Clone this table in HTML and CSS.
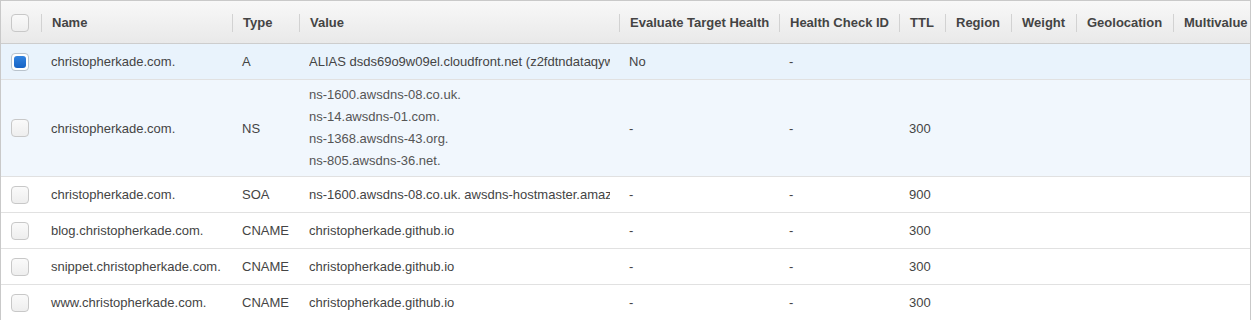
FILE: index.html
```html
<!DOCTYPE html>
<html lang="en">
<head>
    <meta charset="UTF-8">
    <title>Record Sets</title>
    <link rel="stylesheet" href="styles.css">
</head>
<body>
    <div class="records">
        <table class="records-table">
            <colgroup>
                <col class="col-check">
                <col class="col-name">
                <col class="col-type">
                <col class="col-value">
                <col class="col-eval">
                <col class="col-health">
                <col class="col-ttl">
                <col class="col-region">
                <col class="col-weight">
                <col class="col-geo">
                <col class="col-multi">
            </colgroup>
            <thead>
                <tr>
                    <th class="check-cell"><span class="checkbox"></span></th>
                    <th><div class="th-inner">Name</div></th>
                    <th><div class="th-inner">Type</div></th>
                    <th><div class="th-inner">Value</div></th>
                    <th><div class="th-inner">Evaluate Target Health</div></th>
                    <th><div class="th-inner">Health Check ID</div></th>
                    <th><div class="th-inner">TTL</div></th>
                    <th><div class="th-inner">Region</div></th>
                    <th><div class="th-inner">Weight</div></th>
                    <th><div class="th-inner">Geolocation</div></th>
                    <th><div class="th-inner">Multivalue</div></th>
                </tr>
            </thead>
            <tbody>
                <tr class="row-selected">
                    <td class="check-cell"><span class="checkbox checked"></span></td>
                    <td>christopherkade.com.</td>
                    <td>A</td>
                    <td class="value-cell"><div class="value-inner">ALIAS dsds69o9w09el.cloudfront.net (z2fdtndataqyw2)</div></td>
                    <td>No</td>
                    <td>-</td>
                    <td></td>
                    <td></td>
                    <td></td>
                    <td></td>
                    <td></td>
                </tr>
                <tr class="row-hover">
                    <td class="check-cell"><span class="checkbox"></span></td>
                    <td>christopherkade.com.</td>
                    <td>NS</td>
                    <td class="value-cell">
                        <div class="value-list">
                            <div>ns-1600.awsdns-08.co.uk.</div>
                            <div>ns-14.awsdns-01.com.</div>
                            <div>ns-1368.awsdns-43.org.</div>
                            <div>ns-805.awsdns-36.net.</div>
                        </div>
                    </td>
                    <td>-</td>
                    <td>-</td>
                    <td>300</td>
                    <td></td>
                    <td></td>
                    <td></td>
                    <td></td>
                </tr>
                <tr>
                    <td class="check-cell"><span class="checkbox"></span></td>
                    <td>christopherkade.com.</td>
                    <td>SOA</td>
                    <td class="value-cell"><div class="value-inner">ns-1600.awsdns-08.co.uk. awsdns-hostmaster.amazon.com. 1 7200 900 1209600 86400</div></td>
                    <td>-</td>
                    <td>-</td>
                    <td>900</td>
                    <td></td>
                    <td></td>
                    <td></td>
                    <td></td>
                </tr>
                <tr>
                    <td class="check-cell"><span class="checkbox"></span></td>
                    <td>blog.christopherkade.com.</td>
                    <td>CNAME</td>
                    <td class="value-cell"><div class="value-inner">christopherkade.github.io</div></td>
                    <td>-</td>
                    <td>-</td>
                    <td>300</td>
                    <td></td>
                    <td></td>
                    <td></td>
                    <td></td>
                </tr>
                <tr>
                    <td class="check-cell"><span class="checkbox"></span></td>
                    <td>snippet.christopherkade.com.</td>
                    <td>CNAME</td>
                    <td class="value-cell"><div class="value-inner">christopherkade.github.io</div></td>
                    <td>-</td>
                    <td>-</td>
                    <td>300</td>
                    <td></td>
                    <td></td>
                    <td></td>
                    <td></td>
                </tr>
                <tr>
                    <td class="check-cell"><span class="checkbox"></span></td>
                    <td>www.christopherkade.com.</td>
                    <td>CNAME</td>
                    <td class="value-cell"><div class="value-inner">christopherkade.github.io</div></td>
                    <td>-</td>
                    <td>-</td>
                    <td>300</td>
                    <td></td>
                    <td></td>
                    <td></td>
                    <td></td>
                </tr>
            </tbody>
        </table>
    </div>
</body>
</html>
```

FILE: styles.css
```css
* {
    margin: 0;
    padding: 0;
    box-sizing: border-box;
}

body {
    font-family: "Liberation Sans", Arial, sans-serif;
    font-size: 13px;
    color: #444;
    background: #fff;
    height: 320px;
    overflow: hidden;
}

.records {
    width: 1251px;
    border: 1px solid #c9c9c9;
    border-bottom: none;
    overflow: hidden;
}

.records-table {
    width: 1249px;
    table-layout: fixed;
    border-collapse: separate;
    border-spacing: 0;
}

.col-check { width: 40px; }
.col-name { width: 191px; }
.col-type { width: 67px; }
.col-value { width: 320px; }
.col-eval { width: 160px; }
.col-health { width: 120px; }
.col-ttl { width: 46px; }
.col-region { width: 66px; }
.col-weight { width: 65px; }
.col-geo { width: 97px; }
.col-multi { width: 77px; }

/* header */
thead th {
    background: linear-gradient(#f8f8f8, #e9e9e9);
    border-bottom: 1px solid #cdcdcd;
    padding: 13px 0 11px;
    text-align: left;
    font-weight: 700;
    color: #444;
    white-space: nowrap;
    overflow: hidden;
    vertical-align: middle;
}

.th-inner {
    border-left: 1px solid #d2d2d2;
    padding-left: 10px;
    line-height: 18px;
    height: 18px;
    overflow: hidden;
}

/* body rows */
tbody td {
    border-bottom: 1px solid #e1e1e1;
    padding: 0 0 0 10px;
    line-height: 35px;
    white-space: nowrap;
    overflow: hidden;
    vertical-align: middle;
}

.row-selected td {
    background: #e9f3fc;
}

.row-hover td {
    background: #f1f7fd;
}

.check-cell {
    padding-left: 10px;
}

tbody .value-cell {
    padding-right: 9px;
}

.value-inner {
    overflow: hidden;
    white-space: nowrap;
}

.value-list {
    padding: 4px 0;
    line-height: 22px;
    color: #555;
}

/* checkbox */
.checkbox {
    display: block;
    width: 18px;
    height: 18px;
    border: 1px solid #c8c8c8;
    border-radius: 4px;
    background: linear-gradient(#fafafa, #eeeeee);
    padding: 2px;
}

.checkbox.checked {
    background: #fff;
    border-color: #b9c3cc;
}

.checkbox.checked::after {
    content: "";
    display: block;
    width: 12px;
    height: 12px;
    border-radius: 3px;
    background: linear-gradient(#3183e0, #1763c4);
}
```
